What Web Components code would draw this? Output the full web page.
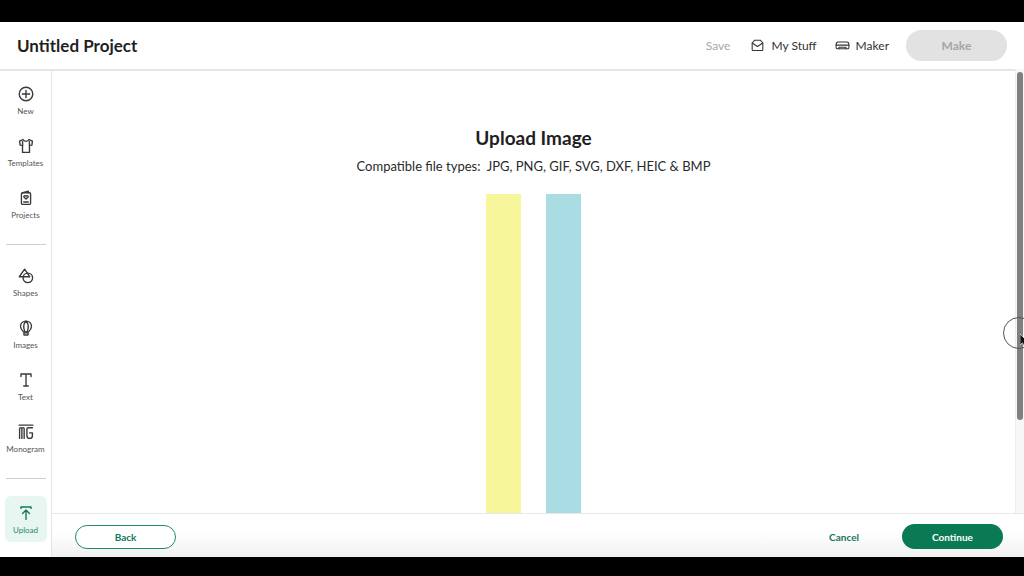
<!DOCTYPE html>
<html>
<head>
<meta charset="utf-8">
<style>
  html, body { margin: 0; height: 100%; background: #000; overflow: hidden; }
  body { font-family: "Lato", "Liberation Sans", sans-serif; color: #1f1f1f; }
</style>
</head>
<body>
<app-frame>
  <top-bar slot="top"></top-bar>
  <side-nav slot="side">
    <nav-item label="New" icon="new"></nav-item>
    <nav-item label="Templates" icon="templates"></nav-item>
    <nav-item label="Projects" icon="projects"></nav-item>
    <nav-rule></nav-rule>
    <nav-item label="Shapes" icon="shapes"></nav-item>
    <nav-item label="Images" icon="images"></nav-item>
    <nav-item label="Text" icon="text"></nav-item>
    <nav-item label="Monogram" icon="monogram"></nav-item>
    <nav-rule></nav-rule>
    <nav-item label="Upload" icon="upload" active></nav-item>
  </side-nav>
  <upload-panel slot="main"></upload-panel>
  <foot-bar slot="main"></foot-bar>
</app-frame>
<script>
const icons = {
  new: `<circle cx="12" cy="12" r="7.4"/><path d="M12 8v8M8 12h8"/>`,
  templates: `<path d="M8.7 5 5 6.8 5.6 11l2.6.3V19h7.6v-7.7l2.6-.3.6-4.2L15.3 5c-.6 1.300-1.900 1.900-3.300 1.900S9.300 6.300 8.700 5z"/><path d="M8.300 11.300V7.200M15.700 11.300V7.200"/>`,
  projects: `<path d="M8.500 6.300 14.500 4.600V6.300"/><rect x="7" y="6.300" width="10" height="12.700" rx="1.300"/><path d="M12 13.200 9.900 11.100c-.9-1.300.9-2.400 2.100-1.100 1.200-1.300 3-.2 2.100 1.100z"/><path d="M9.500 16.300h5"/>`,
  shapes: `<path d="M10.500 4.500 16 12.800H4.700z"/><circle cx="14" cy="14" r="5.200"/>`,
  images: `<path d="M9.300 16.300C7.400 14.700 6 12.800 6 10.200 6 6.800 8.700 4.500 12 4.500s6 2.300 6 5.700c0 2.600-1.400 4.500-3.300 6.100z"/><path d="M12 4.500c-1.700 1.500-2.500 3.500-2.500 5.700 0 2.500.6 4.500 1.300 6.100M12 4.500c1.700 1.500 2.500 3.500 2.500 5.700 0 2.500-.6 4.500-1.300 6.100"/><rect x="9.700" y="17.300" width="4.600" height="2.400" rx=".6"/>`,
  text: `<path d="M6.500 8.300V5.500h11v2.800M12 5.500V18.500M9.500 18.500h5"/>`,
  monogram: `<path d="M4.500 4.500h15M5 19V8.500c0-.9.500-1.300 1.200-1.300s1.300.5 1.300 1.300V19M7.500 8.500c0-.9.600-1.300 1.300-1.300s1.200.5 1.200 1.300V19"/><path d="M19 7.300h-4.500c-1 0-1.500.6-1.500 1.500v6.700c0 2 1.200 3.500 3 3.500s3-1.200 3-3V13h-3"/>`,
  upload: `<path d="M6.500 7V5.500h11V7" /><path d="M12 19V9M8.300 12.500 12 8.800l3.700 3.700"/>`,
  inbox: `<path d="M4.500 8.500 8 4.500h8l3.500 4V18a1 1 0 0 1-1 1h-13a1 1 0 0 1-1-1z"/><path d="M4.500 8.500 12 13.500l7.500-5"/>`,
  maker: `<path d="M3 10.500C3 8.500 4 7 6 7h12c2 0 3 1.500 3 3.500V15c0 .8-.5 1.500-1.500 1.500h-15C3.500 16.500 3 15.800 3 15z"/><path d="M3 11.500h18M7 16.500v-2h10v2"/>`
}
const svg = (name, size) => `<svg viewBox="0 0 24 24" width="${size}" height="${size}" fill="none" stroke="currentColor" stroke-width="1.500" stroke-linejoin="round" stroke-linecap="round">${icons[name]}</svg>`

class AppFrame extends HTMLElement {
  constructor() {
    super()
    this.attachShadow({ mode: "open" }).innerHTML = `
      <style>
        :host { display: flex; flex-direction: column; height: 576px; box-sizing: border-box; padding: 22px 0 19px; }
        .screen { flex: 1; display: flex; flex-direction: column; background: #fff; position: relative; min-height: 0; }
        .body { flex: 1; display: flex; min-height: 0; }
        .main { flex: 1; display: flex; flex-direction: column; min-width: 0; }
        .cursor { position: absolute; left: 1003px; top: 295px; width: 32px; height: 32px; border: 1.500px solid #555; border-radius: 50%; box-sizing: border-box; }
        .pointer { position: absolute; left: 1020px; top: 312px; }
        .thumb { position: absolute; left: 1017px; top: 50px; width: 6px; height: 348px; border-radius: 3px; background: #808080; }
        .track { position: absolute; left: 1015px; top: 47px; width: 9px; height: 444px; background: #f7f7f7; border-left: 1px solid #ececec; box-sizing: border-box; }
        .clip { position: absolute; inset: 0; overflow: hidden; pointer-events: none; }
      </style>
      <div class="screen">
        <slot name="top"></slot>
        <div class="body">
          <slot name="side"></slot>
          <div class="main"><slot name="main"></slot></div>
        </div>
        <div class="clip">
          <div class="track"></div>
          <div class="thumb"></div>
          <div class="cursor"></div>
          <svg class="pointer" width="8" height="16" viewBox="0 0 8 16"><path d="M0 0v11l2.500-2.200L4.500 13l2-1-2-4H8z" fill="#111" stroke="#fff" stroke-width=".6"/></svg>
        </div>
      </div>`
  }
}

class TopBar extends HTMLElement {
  constructor() {
    super()
    this.attachShadow({ mode: "open" }).innerHTML = `
      <style>
        :host { display: flex; align-items: center; height: 47px; flex: none; padding: 0 17px; border-bottom: 2px solid #e6e6e6; background: #fff; box-sizing: content-box; }
        h1 { margin: 0; font-size: 17px; font-weight: 700; color: #1f1f1f; flex: 1; white-space: nowrap; }
        .links { display: flex; align-items: center; font-size: 12px; color: #333; }
        .save { color: #a8a8a8; margin-right: 19px; }
        .link { display: flex; align-items: center; gap: 5px; margin-right: 17px; }
        svg { display: block; }
        .make { width: 101px; height: 31px; border-radius: 16px; background: #e2e2e2; color: #a5a5a5; font-size: 12px; font-weight: 700; display: flex; align-items: center; justify-content: center; }
      </style>
      <h1>Untitled Project</h1>
      <div class="links">
        <span class="save">Save</span>
        <span class="link">${svg("inbox", 17)}My Stuff</span>
        <span class="link">${svg("maker", 17)}Maker</span>
        <span class="make">Make</span>
      </div>`
  }
}

class SideNav extends HTMLElement {
  constructor() {
    super()
    this.attachShadow({ mode: "open" }).innerHTML = `
      <style>
        :host { display: flex; flex-direction: column; align-items: center; width: 51px; flex: none; border-right: 1px solid #e4e4e4; padding-top: 9px; box-sizing: content-box; background: #fff; }
      </style>
      <slot></slot>`
  }
}

class NavItem extends HTMLElement {
  constructor() {
    super()
    this.attachShadow({ mode: "open" })
  }
  connectedCallback() {
    const active = this.hasAttribute("active")
    this.shadowRoot.innerHTML = `
      <style>
        :host { display: flex; flex-direction: column; align-items: center; width: 42px; height: 52px; padding-top: 3px; box-sizing: border-box; font-size: 8px; color: #555; white-space: nowrap; }
        :host([active]) { height: 46px; padding-top: 6px; border-radius: 6px; background: #e8f6f2; color: #1f8a68; }
        svg { display: block; margin-bottom: 1px; color: ${active ? "#117a58" : "#3a3a3a"}; }
      </style>
      ${svg(this.getAttribute("icon"), 22)}
      <span>${this.getAttribute("label")}</span>`
  }
}

class NavRule extends HTMLElement {
  constructor() {
    super()
    this.attachShadow({ mode: "open" }).innerHTML = `
      <style>
        :host { display: block; width: 40px; height: 1px; background: #d0d0d0; margin: 8px 0 17px; flex: none; }
      </style>`
  }
}

class UploadPanel extends HTMLElement {
  constructor() {
    super()
    this.attachShadow({ mode: "open" }).innerHTML = `
      <style>
        :host { display: flex; flex-direction: column; align-items: center; flex: 1; min-height: 0; padding: 55px 9px 0 0; overflow: hidden; }
        h2 { margin: 0; font-size: 19px; line-height: 24px; font-weight: 700; color: #1f1f1f; }
        p { margin: 7px 0 0; font-size: 13px; line-height: 18px; color: #2a2a2a; white-space: pre; }
        .bars { flex: 1; display: flex; gap: 25px; margin-top: 19px; }
        .bar { width: 35px; }
        .yellow { background: #f8f69a; }
        .blue { background: #a9dce3; }
      </style>
      <h2>Upload Image</h2>
      <p>Compatible file types:  JPG, PNG, GIF, SVG, DXF, HEIC &amp; BMP</p>
      <div class="bars"><div class="bar yellow"></div><div class="bar blue"></div></div>`
  }
}

class FootBar extends HTMLElement {
  constructor() {
    super()
    this.attachShadow({ mode: "open" }).innerHTML = `
      <style>
        :host { display: flex; align-items: center; height: 44px; flex: none; box-sizing: border-box; padding: 2px 21px 0 23px; border-top: 1px solid #e8e8e8; background: linear-gradient(#fff 40%, #f1f1f1); font-size: 10px; font-weight: 700; }
        .back { width: 101px; height: 24px; box-sizing: border-box; border: 1px solid #1f8a68; border-radius: 12px; color: #14785a; display: flex; align-items: center; justify-content: center; background: #fff; }
        .cancel { margin-left: auto; margin-right: 43px; color: #14785a; }
        .next { width: 101px; height: 25px; border-radius: 13px; background: #0a7a55; color: #fff; display: flex; align-items: center; justify-content: center; }
      </style>
      <span class="back">Back</span>
      <span class="cancel">Cancel</span>
      <span class="next">Continue</span>`
  }
}

customElements.define("app-frame", AppFrame)
customElements.define("top-bar", TopBar)
customElements.define("side-nav", SideNav)
customElements.define("nav-item", NavItem)
customElements.define("nav-rule", NavRule)
customElements.define("upload-panel", UploadPanel)
customElements.define("foot-bar", FootBar)
</script>
</body>
</html>
